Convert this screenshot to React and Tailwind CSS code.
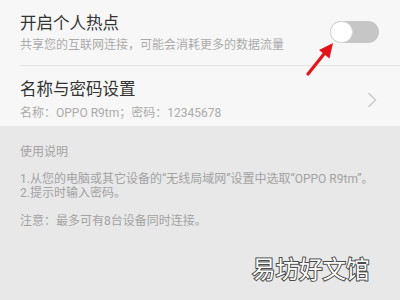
import React from "react";

const Toggle = () => (
  <div className="relative w-[49px] h-[22px] rounded-full bg-[#c6c6c6] mt-[7px] shrink-0">
    <div className="absolute left-0 top-0 w-[23px] h-[22px] rounded-full bg-white border border-[#d8d8d8]" />
  </div>
);

const Arrow = () => (
  <svg
    className="absolute left-[300px] top-[38px]"
    width="40"
    height="42"
    viewBox="0 0 40 42"
  >
    <line x1="8" y1="36" x2="24" y2="16" stroke="#e3151b" strokeWidth="3.2" strokeLinecap="round" />
    <polygon points="33,5 29.5,20.5 19,12" fill="#e3151b" />
  </svg>
);

export default function App() {
  return (
    <div className="relative w-[400px] h-[300px] overflow-hidden bg-[#e8e8e8] font-['Roboto','Noto_Sans_CJK_SC',sans-serif]">
      <div className="bg-[#f7f7f7]">
        {/* hotspot switch */}
        <div className="flex justify-between h-[65px] pl-[20px] pr-[21px] pt-[14px]">
          <div>
            <div className="text-[16.5px] leading-[20px] text-[#333]">开启个人热点</div>
            <div className="text-[12px] leading-[16px] mt-[3px] text-[#ababab]">
              共享您的互联网连接，可能会消耗更多的数据流量
            </div>
          </div>
          <Toggle />
        </div>

        <div className="ml-[20px] h-px bg-[#e4e4e4]" />

        {/* name & password */}
        <div className="flex justify-between h-[60px] pl-[20px] pr-[23px] pt-[14px]">
          <div>
            <div className="text-[16.5px] leading-[20px] text-[#333]">名称与密码设置</div>
            <div className="text-[12px] leading-[16px] mt-[5px] text-[#ababab]">
              名称：OPPO R9tm；密码：12345678
            </div>
          </div>
          <svg className="mt-[12px]" width="10" height="16" viewBox="0 0 10 16">
            <polyline points="1.5,1 8.5,8 1.5,15" fill="none" stroke="#c6c6c6" strokeWidth="1.3" />
          </svg>
        </div>
      </div>

      {/* usage notes */}
      <div className="px-[20px] pt-[18px] text-[12px] text-[#a3a3a3]">
        <div className="leading-[16px]">使用说明</div>
        <div className="mt-[12px] leading-[14px]">
          <div>1.从您的电脑或其它设备的“无线局域网”设置中选取“OPPO R9tm”。</div>
          <div>2.提示时输入密码。</div>
        </div>
        <div className="mt-[14px] leading-[14px]">注意：最多可有8台设备同时连接。</div>
      </div>

      <Arrow />

      <div className="absolute left-[252px] top-[254px] text-[23.5px] leading-[28px] text-white font-['Noto_Sans_CJK_SC',sans-serif] [-webkit-text-stroke:2px_#4a4a4a] [paint-order:stroke_fill]">
        易坊好文馆
      </div>
    </div>
  );
}
